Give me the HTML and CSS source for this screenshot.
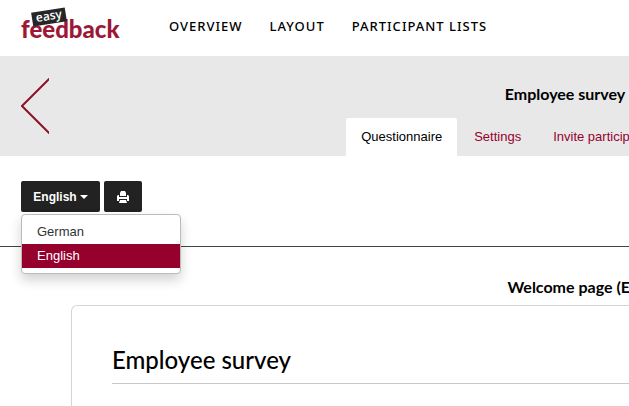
FILE: index.html
```html
<!DOCTYPE html>
<html lang="en">

<head>
  <meta charset="UTF-8">
  <meta name="viewport" content="width=device-width, initial-scale=1.0">
  <title>Employee survey - easyfeedback</title>
  <link rel="stylesheet" href="styles.css">
</head>

<body>
  <div class="page">
    <header class="topbar">
      <a href="#" class="logo">
        <span class="logo-name">feedback</span>
        <span class="logo-tag">easy</span>
      </a>
      <nav class="main-nav">
        <a href="#">OVERVIEW</a>
        <a href="#">LAYOUT</a>
        <a href="#">PARTICIPANT LISTS</a>
      </nav>
    </header>

    <section class="survey-head">
      <a href="#" class="back" aria-label="Back">
        <svg width="28" height="56" viewBox="0 0 28 56" fill="none" stroke="#8b1229" stroke-width="2">
          <path d="M29 0 L1 28 L29 56" />
        </svg>
      </a>
      <h1>Employee survey</h1>
      <nav class="tabs">
        <a href="#" class="active">Questionnaire</a>
        <a href="#">Settings</a>
        <a href="#">Invite participants</a>
        <a href="#">Survey results</a>
      </nav>
    </section>

    <div class="toolbar">
      <div class="dropdown">
        <button type="button" class="btn btn-lang" id="langBtn" aria-expanded="true">English <span class="caret"></span></button>
        <ul class="dropdown-menu" aria-labelledby="langBtn">
          <li><a href="#">German</a></li>
          <li><a href="#" class="selected">English</a></li>
        </ul>
      </div>
      <button type="button" class="btn btn-print" aria-label="Print">
        <svg width="12" height="12" viewBox="0 0 12 12" fill="#fff">
          <path d="M3 5V2L4 0H8L9 2V5Z" />
          <path d="M0 5L1 4H2V6H10V4H11L12 5V10H10V8H2V10H0Z" />
          <path d="M3 9H9L10 12H2Z" />
        </svg>
      </button>
    </div>

    <main class="content">
      <h2>Welcome page (English)</h2>
      <div class="card">
        <h3>Employee survey</h3>
      </div>
    </main>
  </div>
</body>

</html>
```

FILE: styles.css
```css
* {
  margin: 0;
  padding: 0;
  box-sizing: border-box;
}

html {
  overflow: hidden;
}

body {
  font-family: 'Liberation Sans', Arial, sans-serif;
  font-size: 13px;
  line-height: 20px;
  color: #000;
  background: #fff;
  overflow: hidden;
}

a {
  color: #96002d;
  text-decoration: none;
}

/* desktop layout, never narrower than this */
.page {
  min-width: 1130px;
  min-height: 100vh;
  display: flex;
  flex-direction: column;
}

/* Top bar */
.topbar {
  display: flex;
  align-items: center;
  height: 56px;
  padding: 0 21px;
}

.logo {
  position: relative;
  width: 98px;
  height: 40px;
  margin-right: 50px;
}

.logo-name {
  display: block;
  padding-top: 6px;
  font-family: Lato, sans-serif;
  font-size: 24px;
  font-weight: 900;
  line-height: 30px;
  color: #9d1736;
}

.logo-tag {
  position: absolute;
  top: 2px;
  left: 11px;
  width: 34px;
  height: 14px;
  background: #262626;
  color: #fff;
  font-family: 'Open Sans', sans-serif;
  font-size: 12px;
  font-weight: 600;
  line-height: 12px;
  text-align: center;
  transform: rotate(-9deg);
}

.main-nav {
  display: flex;
  gap: 27px;
  padding-bottom: 4px;
}

.main-nav a {
  color: #000;
  font-family: 'Noto Sans', sans-serif;
  font-size: 13px;
  font-weight: 500;
  letter-spacing: 1px;
}

/* Survey header with tabs */
.survey-head {
  position: relative;
  display: flex;
  flex-direction: column;
  align-items: center;
  justify-content: space-between;
  height: 100px;
  padding-top: 28px;
  background: #e8e8e8;
}

.survey-head h1,
.content h2 {
  font-family: Lato, sans-serif;
  font-size: 16px;
  font-weight: 700;
  line-height: 20px;
}

.back {
  position: absolute;
  top: 22px;
  left: 21px;
}

.back svg {
  display: block;
}

.tabs {
  display: flex;
  gap: 2px;
}

.tabs a {
  padding: 9px 15px;
}

.tabs .active {
  background: #fff;
  color: #000;
  border-radius: 2px 2px 0 0;
}

/* Language and print buttons */
.toolbar {
  display: flex;
  gap: 4px;
  height: 91px;
  padding: 25px 21px;
  border-bottom: 1px solid #444;
}

.btn {
  display: flex;
  align-items: center;
  justify-content: center;
  height: 31px;
  border: none;
  border-radius: 2px;
  background: #222;
  color: #fff;
  font-family: inherit;
  cursor: pointer;
}

.btn-lang {
  width: 79px;
  gap: 3px;
  font-size: 12px;
  font-weight: 700;
}

.btn-print {
  width: 38px;
}

.caret {
  border-top: 4px solid #fff;
  border-left: 4px solid transparent;
  border-right: 4px solid transparent;
}

.dropdown {
  position: relative;
}

.dropdown-menu {
  position: absolute;
  top: 33px;
  left: 0;
  z-index: 10;
  width: 160px;
  padding: 5px 0;
  list-style: none;
  background: #fff;
  border: 1px solid #bbb;
  border-radius: 4px;
  box-shadow: 0 6px 12px rgba(0, 0, 0, 0.18);
}

.dropdown-menu a {
  display: block;
  padding: 2px 15px;
  color: #333;
}

.dropdown-menu .selected {
  background: #96002d;
  color: #fff;
}

/* Survey page */
.content {
  flex: 1;
  display: flex;
  flex-direction: column;
  padding: 30px 18px 0 71px;
}

.content h2 {
  text-align: center;
}

.card {
  flex: 1;
  margin-top: 8px;
  padding: 38px 40px;
  border: 1px solid #d5d5d5;
  border-bottom: none;
  border-radius: 6px 6px 0 0;
}

.card h3 {
  padding-bottom: 7px;
  border-bottom: 1px solid #c8c8c8;
  font-family: Lato, sans-serif;
  font-size: 24px;
  font-weight: 500;
  line-height: 32px;
}
```
